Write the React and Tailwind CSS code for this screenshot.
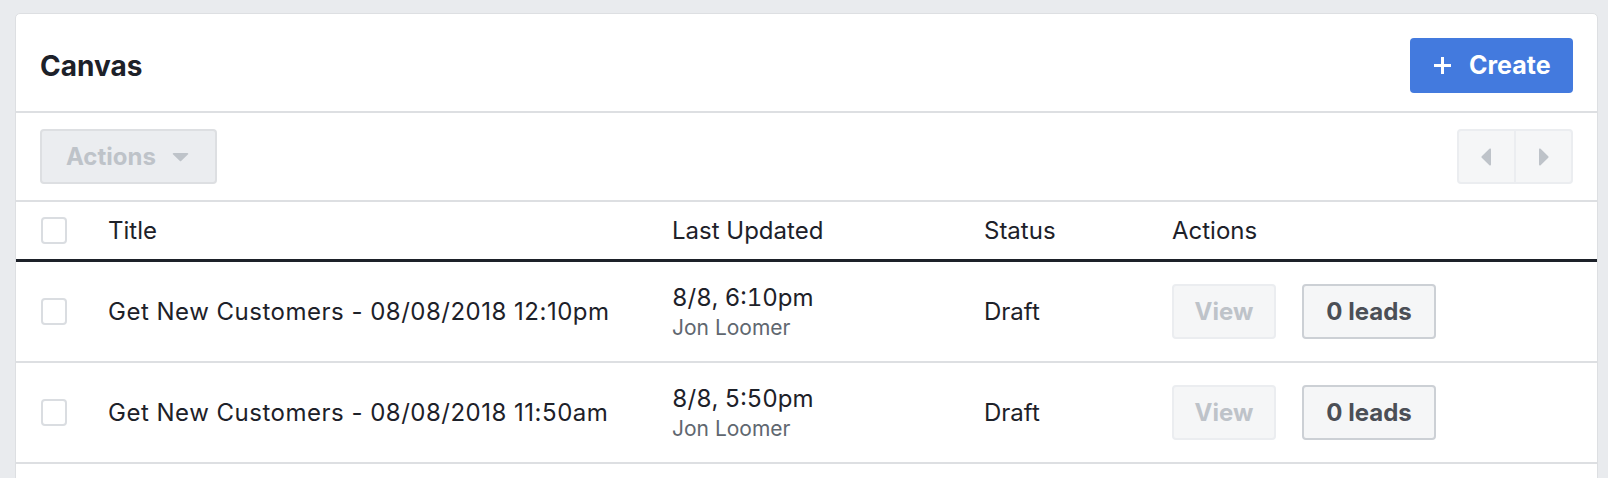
import React from "react";

function Checkbox() {
  return <div className="w-[26px] h-[27px] rounded-[4px] border-2 border-[#dadde1] bg-white" />;
}

function Row({ title, date, author }) {
  return (
    <div className="grid grid-cols-[67px_564px_312px_188px_1fr] items-center h-[101px] pl-[25px] border-b-2 border-[#dddfe2]">
      <Checkbox />
      <div className="text-[24px] text-[#1d2129] leading-none tracking-[0.5px]">{title}</div>
      <div className="flex flex-col pt-[2px]">
        <div className="text-[24px] text-[#1d2129] leading-[30px] tabular-nums">{date}</div>
        <div className="text-[21px] text-[#606770] leading-[29px]">{author}</div>
      </div>
      <div className="text-[24px] text-[#1d2129] leading-none">Draft</div>
      <div className="flex items-center gap-[26px]">
        <button className="w-[104px] h-[55px] rounded-[4px] border-2 border-[#ebedf0] bg-[#f5f6f7] text-[24px] font-bold text-[#bec3c9]">View</button>
        <button className="w-[134px] h-[55px] rounded-[4px] border-2 border-[#ccd0d5] bg-[#f5f6f7] text-[24px] font-bold text-[#4b4f56]">0 leads</button>
      </div>
    </div>
  );
}

export default function App() {
  return (
    <div className="w-[1608px] h-[478px] overflow-hidden bg-[#e9ebee] pl-[15px] pr-[10px] pt-[13px] font-['Inter',sans-serif]">
      <div className="h-[600px] bg-white border border-[#dddfe2] rounded-[5px]">
        <div className="flex items-center justify-between pl-[24px] pr-[24px] pt-[24px] pb-[18px] border-b-2 border-[#dddfe2]">
          <div className="text-[28px] font-bold text-[#1d2129] leading-none">Canvas</div>
          <button className="flex items-center h-[55px] w-[163px] rounded-[4px] bg-[#437ade] pl-[23px] text-white">
            <svg width="19" height="19" viewBox="0 0 19 19" className="shrink-0">
              <path d="M9.5 1v17M1 9.5h17" stroke="white" strokeWidth="3" strokeLinecap="butt" />
            </svg>
            <span className="ml-[17px] text-[25px] font-bold leading-none">Create</span>
          </button>
        </div>
        <div className="flex items-center justify-between pl-[24px] pr-[24px] pt-[16px] pb-[16px] border-b-2 border-[#dddfe2]">
          <button className="flex items-center h-[55px] w-[177px] rounded-[4px] border-2 border-[#dddfe2] bg-[#ebedf0] pl-[24px] text-[#bec3c9]">
            <span className="text-[24px] font-bold leading-none">Actions</span>
            <svg width="17" height="10" viewBox="0 0 17 10" className="ml-[16px]">
              <path d="M1.5 1h14a0.8 0.8 0 0 1 .6 1.3L9.1 9a0.8 0.8 0 0 1-1.2 0L.9 2.3A0.8 0.8 0 0 1 1.5 1z" fill="#bec3c9" />
            </svg>
          </button>
          <div className="flex h-[55px] w-[116px] rounded-[4px] border-2 border-[#ebedf0] bg-[#f5f6f7]">
            <div className="flex-1 flex items-center justify-center border-r-2 border-[#ebedf0]">
              <svg width="11" height="18" viewBox="0 0 11 18">
                <path d="M10 1.5v15a1 1 0 0 1-1.6.8L1 10a1.3 1.3 0 0 1 0-2l7.4-7.3A1 1 0 0 1 10 1.5z" fill="#bec3c9" />
              </svg>
            </div>
            <div className="flex-1 flex items-center justify-center">
              <svg width="11" height="18" viewBox="0 0 11 18">
                <path d="M1 1.5v15a1 1 0 0 0 1.6.8L10 10a1.3 1.3 0 0 0 0-2L2.6.7A1 1 0 0 0 1 1.5z" fill="#bec3c9" />
              </svg>
            </div>
          </div>
        </div>
        <div className="grid grid-cols-[67px_564px_312px_188px_1fr] items-center h-[60px] pl-[25px] border-b-[3px] border-[#1d2129] text-[24px] text-[#1d2129] leading-none">
          <Checkbox />
          <div>Title</div>
          <div>Last Updated</div>
          <div>Status</div>
          <div>Actions</div>
        </div>
        <Row title="Get New Customers - 08/08/2018 12:10pm" date="8/8, 6:10pm" author="Jon Loomer" />
        <Row title="Get New Customers - 08/08/2018 11:50am" date="8/8, 5:50pm" author="Jon Loomer" />
      </div>
    </div>
  );
}
